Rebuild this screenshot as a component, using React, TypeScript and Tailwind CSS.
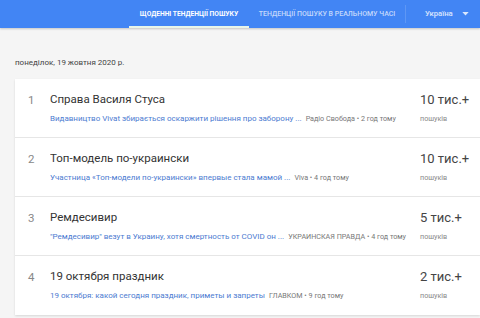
import React from "react";

const rows = [
  {
    n: "1",
    title: "Справа Василя Стуса",
    sub: "Видавництво Vivat збирається оскаржити рішення про заборону ...",
    src: "Радіо Свобода • 2 год тому",
    count: "10 тис.+",
  },
  {
    n: "2",
    title: "Топ-модель по-украински",
    sub: "Участница «Топ-модели по-украински» впервые стала мамой ...",
    src: "Viva • 4 год тому",
    count: "10 тис.+",
  },
  {
    n: "3",
    title: "Ремдесивир",
    sub: "\"Ремдесивир\" везут в Украину, хотя смертность от COVID он ...",
    src: "УКРАИНСКАЯ ПРАВДА • 4 год тому",
    count: "5 тис.+",
  },
  {
    n: "4",
    title: "19 октября праздник",
    sub: "19 октября: какой сегодня праздник, приметы и запреты",
    src: "ГЛАВКОМ • 9 год тому",
    count: "2 тис.+",
  },
];

export default function App() {
  return (
    <div className="w-[480px] h-[318px] overflow-hidden bg-[#f5f5f5]" style={{ fontFamily: "Roboto, 'Liberation Sans', sans-serif" }}>
      <div className="h-[28px] bg-[#4285f4] flex items-stretch shadow-[0_1px_2px_rgba(0,0,0,0.2)]">
        <div className="w-[129px]" />
        <div className="w-[120px] relative flex items-center justify-center text-[6.7px] font-bold text-white">
          ЩОДЕННІ ТЕНДЕНЦІЇ ПОШУКУ
          <div className="absolute left-0 right-0 bottom-0 h-[2px] bg-[#e8f5e9]" />
        </div>
        <div className="w-[156px] flex items-center justify-center text-[7px] font-medium text-white/70">
          ТЕНДЕНЦІЇ ПОШУКУ В РЕАЛЬНОМУ ЧАСІ
        </div>
        <div className="flex items-center">
          <div className="w-px h-[18px] bg-white/15" />
        </div>
        <div className="flex items-center pl-[19px] text-[7.7px] font-medium text-white/80">
          Україна
          <svg width="7" height="4" viewBox="0 0 8 5" className="ml-[9px]">
            <path d="M0 0 L8 0 L4 4.5 Z" fill="rgba(255,255,255,0.8)" />
          </svg>
        </div>
      </div>
      <div className="pl-[15px] pt-[29px] text-[8px] text-[#444]">понеділок, 19 жовтня 2020 р.</div>
      <div className="ml-[15px] mt-[10px] bg-white shadow-[0_1px_2px_rgba(0,0,0,0.12)]">
        {rows.map((r, i) => (
          <div key={i} className={`h-[59px] flex items-center ${i < rows.length - 1 ? "border-b border-[#e6e6e6]" : ""}`}>
            <div className="w-[35px] pl-[13px] text-[11.5px] text-[#888] self-start pt-[13px]">{r.n}</div>
            <div className="flex-1 self-start pt-[13px] min-w-0 overflow-hidden pr-[8px]">
              <div className="text-[11.5px] leading-[15px] text-[#333]">{r.title}</div>
              <div className="mt-[6px] flex items-baseline whitespace-nowrap">
                <span className="text-[8px] text-[#4c7bd1]">{r.sub}</span>
                <span className="ml-[4px] text-[7.2px] text-[#777]">{r.src}</span>
              </div>
            </div>
            <div className="w-[60px] self-start pt-[13px]">
              <div className="text-[13px] leading-[15px] text-[#444]">{r.count}</div>
              <div className="mt-[7px] text-[7.2px] text-[#888]">пошуків</div>
            </div>
          </div>
        ))}
      </div>
    </div>
  );
}
